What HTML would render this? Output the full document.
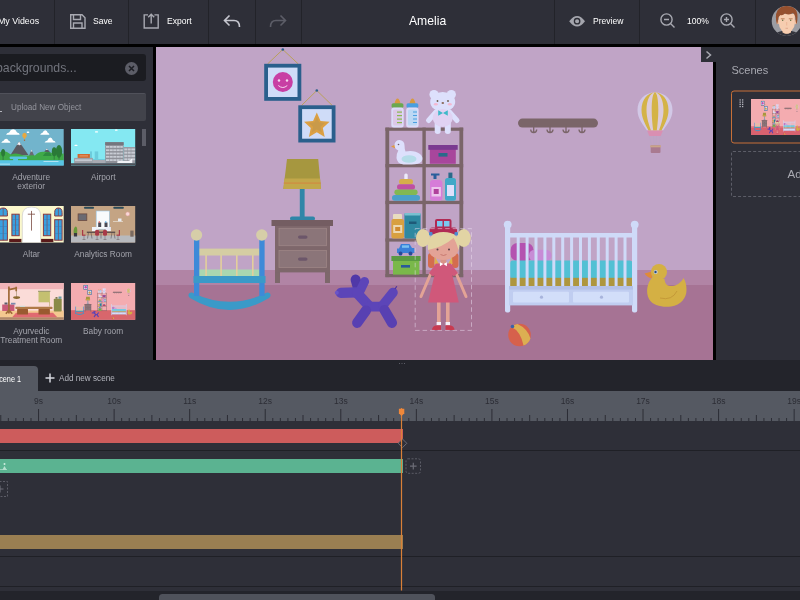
<!DOCTYPE html>
<html><head><meta charset="utf-8"><title>Amelia</title>
<style>
*{box-sizing:border-box;margin:0;padding:0}
html,body{width:800px;height:600px;overflow:hidden;background:#000;font-family:"Liberation Sans",sans-serif;color:#fff}
.abs{position:absolute}
#top{position:absolute;left:0;top:0;width:800px;height:44px;background:#2e2f38}
.sep{position:absolute;top:0;width:1px;height:44px;background:#222329}
.tl{position:absolute;top:0;height:43px;line-height:42px;font-size:9.5px;color:#fff;white-space:nowrap;transform-origin:0 50%;transform:scaleX(.9)}
#left{position:absolute;left:0;top:47px;width:153px;height:313px;background:#2e2f38}
#search{position:absolute;left:-10px;top:7px;width:156px;height:27px;background:#1b1c21;border-radius:3px}
#search span{position:absolute;left:6.3px;transform-origin:0 50%;transform:scaleX(.945);top:0;line-height:27px;font-size:13px;color:#72747d;white-space:nowrap}
#upload{position:absolute;left:-10px;top:46px;width:156px;height:28px;background:#42434b;border-radius:2px;border-top:1px solid #50515a}
#upload span{position:absolute;left:20.5px;transform-origin:0 50%;transform:scaleX(.96);top:0;line-height:27px;font-size:8.5px;color:#94959d;white-space:nowrap}
.th{position:absolute;width:65px;height:37px;overflow:hidden}
.lb{position:absolute;width:78px;text-align:center;font-size:9px;line-height:9.5px;color:#b9bac2}
#right{position:absolute;left:716px;top:47px;width:84px;height:313px;background:#2e2f38}
#mid{position:absolute;left:0;top:360px;width:800px;height:31px;background:#23242b}
#tab{position:absolute;left:-10px;top:6px;width:47.5px;height:25px;background:#555962;border-radius:0 4px 0 0;font-size:9.5px;line-height:25px;color:#fff}
#ruler{position:absolute;left:0;top:391px;width:800px;height:30px;background:#555962}
#tracks{position:absolute;left:0;top:421px;width:800px;height:179px;background:#2e2f38}
.bar{position:absolute;left:0;width:403px;height:14px}
.hl{position:absolute;left:0;width:800px;height:1px;background:#1f2026}
</style></head><body>
<div id="app" style="position:absolute;left:0;top:0;width:800px;height:600px;overflow:hidden;will-change:transform;transform:translateZ(0)">
<div id="top">
 <div class="tl" style="left:-2px;transform:scaleX(.93)">My Videos</div>
 <div class="sep" style="left:54px"></div>
 <div class="tl" style="left:93px">Save</div>
 <div class="sep" style="left:128px"></div>
 <div class="tl" style="left:167px">Export</div>
 <div class="sep" style="left:208px"></div>
 <div class="sep" style="left:255px"></div>
 <div class="sep" style="left:301px"></div>
 <div class="tl" style="left:409px;font-size:13px;transform:scaleX(.935)">Amelia</div>
 <div class="sep" style="left:554px"></div>
 <div class="tl" style="left:593px">Preview</div>
 <div class="sep" style="left:639px"></div>
 <div class="tl" style="left:687px">100%</div>
 <div class="sep" style="left:755px"></div>
 <svg class="abs" style="left:0;top:0" width="800" height="43" viewBox="0 0 800 43" fill="none" stroke="#a8a9b1" stroke-width="1.4">
  <!-- save -->
  <path d="M70.7 14.7h11.3l3 3v10.6h-14.3z"/><path d="M73.5 14.7v4.8h7v-4.8M73.5 28.3v-5.3h8.5v5.3"/>
  <!-- export -->
  <path d="M148 14.9h-3.8v13.1h14v-13.1h-3.8"/><path d="M151.2 23.6v-9.5M148.2 17.2l3-3 3 3"/>
  <!-- undo -->
  <path d="M229.5 15.5l-5 5 5 5M224.5 20.5h9.5q5.5 0 5.5 6.5" stroke="#c6c7cf" stroke-width="1.6"/>
  <!-- redo -->
  <path d="M280.5 15.5l5 5-5 5M285.5 20.5h-9.5q-5.5 0-5.5 6.5" stroke="#5c5d67" stroke-width="1.6"/>
  <!-- eye -->
  <path d="M569.2 21.2q7.9-10.6 15.8 0q-7.9 10.6-15.8 0z" fill="#a4a5ad" stroke="none"/><circle cx="577.1" cy="21.2" r="2.7" fill="#a4a5ad" stroke="#2c2d35" stroke-width="1.3"/>
  <!-- zoom out -->
  <circle cx="666.5" cy="19.5" r="5.6"/><path d="M670.5 23.5l4 4M664 19.5h5"/>
  <!-- zoom in -->
  <circle cx="726.5" cy="19.5" r="5.6"/><path d="M730.5 23.5l4 4M724 19.5h5M726.5 17v5"/>
 </svg>
 <!-- avatar -->
 <svg class="abs" style="left:770px;top:4px" width="30" height="34" viewBox="770 4 30 34">
  <defs><clipPath id="av"><circle cx="786.7" cy="21" r="15"/></clipPath></defs>
  <circle cx="786.7" cy="21" r="15" fill="#9c9da3"/>
  <g clip-path="url(#av)">
   <path d="M773 38q1-5.5 9-7h9.5q8 1.5 9 7z" fill="#33343c"/>
   <path d="M782.5 28h8.5v4.5q-4.2 2.5-8.5 0z" fill="#f0c0a0"/>
   <ellipse cx="778" cy="22" rx="1.5" ry="2.3" fill="#eebb9c"/><ellipse cx="795.7" cy="22" rx="1.5" ry="2.3" fill="#eebb9c"/>
   <path d="M778.8 14h16v9.5q0 4-3 7l-2.5 2.5q-2.5 1-5 0l-2.5-2.5q-3-3-3-7z" fill="#f6cdb0"/>
   <path d="M777 24.5q-2.5-9 0.5-14q3.5-5 9.5-4.5q7 0 9.5 5q2 5 0 13.5q-1-3-1.2-7.5q-0.5-2.5-2.3-4q-3.5 2.5-8 0.5q-2.5 2.5-4.5 1.5q-2.5 1.5-2.5 4.5q0 3-1 5z" fill="#96502e"/>
   <path d="M780.8 18.8h3.8M788.8 18.8h3.8" stroke="#b8764e" stroke-width="0.9"/><circle cx="782.7" cy="20.3" r="0.7" fill="#5a6a3a"/><circle cx="790.7" cy="20.3" r="0.7" fill="#5a6a3a"/>
   <path d="M785.5 28.3h2.5" stroke="#d89a80" stroke-width="0.7"/><path d="M786.7 22v3.5" stroke="#e8b090" stroke-width="0.8"/>
  </g>
 </svg>
</div>

<div id="left">
 <div id="search"><span>backgrounds...</span>
  <svg class="abs" style="left:135px;top:8px" width="13" height="13" viewBox="0 0 13 13"><circle cx="6.5" cy="6.5" r="6.5" fill="#5c5d67"/><path d="M4 4l5 5M9 4l-5 5" stroke="#1d1e24" stroke-width="1.5"/></svg>
 </div>
 <div id="upload"><span>Upload New Object</span><div class="abs" style="left:0;top:17px;width:12px;height:1px;background:#b4b5bd"></div></div>
 <div class="abs" style="left:142px;top:82px;width:4px;height:17px;background:#5c5d67"></div>
<svg class="abs" style="left:0;top:0" width="153" height="313" viewBox="0 47 153 313">
 <defs>
  <clipPath id="c1"><rect x="-1" y="129" width="64.7" height="36.5"/></clipPath>
  <clipPath id="c2"><rect x="71" y="129" width="64.2" height="36.6"/></clipPath>
  <clipPath id="c3"><rect x="-1" y="206" width="64.7" height="36.5"/></clipPath>
  <clipPath id="c4"><rect x="71" y="206" width="64.2" height="36.5"/></clipPath>
  <clipPath id="c5"><rect x="-1" y="283" width="64.7" height="36.7"/></clipPath>
  <clipPath id="c6"><rect x="71" y="283" width="64.2" height="36.7"/></clipPath>
 </defs>
 <!-- Adventure exterior -->
 <g clip-path="url(#c1)">
  <rect x="-1" y="129" width="65" height="37" fill="#72b4cc"/>
  <g fill="#fff"><path d="M6.1 134.7q0.5-2 3-2.2q1.5-3.2 4-3.2q2.5 0 4 3.2q2.5 0.2 2.6 2.2z"/><path d="M40.2 134.7q0.5-1.7 2.3-2q1-2.5 2.8-2.5t2.4 2.5q1.6 0.3 1.7 2z"/><path d="M1.3 142.8q0.5-1.7 2.3-2q1-2.1 2.6-2.1t2.4 2.1q1.8 0.3 1.9 2z"/><path d="M44.6 142.6q0.6-2 2.8-2.2q1.2-3 2.9-3t2.7 3q2.4 0.2 2.6 2.2z"/><rect x="26.7" y="131.5" width="2.6" height="1.4" rx="0.7"/></g>
  <ellipse cx="24.5" cy="135.4" rx="2.2" ry="2.6" fill="#e8a840"/><path d="M23.3 137.5l1.2 2l1.2-2z" fill="#e8a840"/><rect x="23.9" y="139.6" width="1.2" height="1.3" fill="#a86a38"/>
  <path d="M10.5 155l8.6-13.4 9.3 13.4z" fill="#5a5a62"/><path d="M19.1 141.6l-2.2 3.5 1.4-0.5 0.9 1 1-1 1.3 0.6z" fill="#f4f4f8"/>
  <path d="M29 156l2.5-6.4 2.8 6.4z" fill="#6a6a72"/><path d="M31.5 149.6l-0.7 1.8h1.5z" fill="#f4f4f8"/><path d="M43.5 153l3.3-4.4 4 4.4z" fill="#5a5a62"/><path d="M46.8 148.6l-0.9 1.3h2z" fill="#f4f4f8"/>
  <path d="M-1 161v-8.5q4-2 8-0.5q2.5 1.5 4 2.5q4-1.5 8-0.5q5 2 10 1.5q4-0.5 6 0q3-3.5 8-3.7q5-0.2 9 1.2q5 1 12 0.5v7.5z" fill="#3faa48"/>
  <path d="M42.9 156q2-4 5-3.8q3 0.2 3.7 3.8z" fill="#2e8a40"/>
  <g fill="#2a7a38"><ellipse cx="3.1" cy="152.7" rx="2" ry="3.7"/><ellipse cx="54.2" cy="151.8" rx="2.4" ry="4.5"/><ellipse cx="59" cy="151.4" rx="3.2" ry="6.3"/></g>
  <path d="M3.1 156v4M54.2 156v3.7M59 157v2.7" stroke="#2a6a38" stroke-width="0.7"/>
  <rect x="9.6" y="156.6" width="17.5" height="2.3" rx="1" fill="#58c4e4"/><rect x="13.1" y="158" width="4.9" height="3" fill="#58c4e4"/>
  <rect x="-1" y="160.2" width="65" height="6" fill="#58c4e4"/><rect x="43.5" y="161.2" width="15" height="0.8" fill="#c8ecf8"/><rect x="0" y="163.7" width="10" height="0.8" fill="#c8ecf8"/>
 </g>
 <!-- Airport -->
 <g clip-path="url(#c2)">
  <rect x="71" y="129" width="65" height="37" fill="#84e8f2"/>
  <rect x="95" y="131.2" width="3" height="1.3" rx="0.6" fill="#fff"/><rect x="115" y="129.6" width="2.6" height="1.2" rx="0.6" fill="#fff"/><rect x="74.5" y="144.8" width="3" height="1.3" rx="0.6" fill="#fff"/>
  <rect x="90" y="151.4" width="2" height="9" fill="#6cccdc"/><rect x="94.7" y="151.4" width="3.5" height="9" fill="#6cccdc"/><rect x="92" y="159" width="14" height="1.5" fill="#6cccdc"/>
  <rect x="105.2" y="142.2" width="18.4" height="21.2" fill="#8e9098"/><rect x="105.2" y="142.2" width="18.4" height="2.8" fill="#74767e"/><rect x="123.6" y="147" width="11.7" height="16.4" fill="#9a9ca4"/>
  <g fill="#c8ccd4"><rect x="106" y="146" width="16.8" height="1.8"/><rect x="106" y="149.3" width="16.8" height="1.8"/><rect x="106" y="152.6" width="16.8" height="1.8"/><rect x="106" y="155.9" width="16.8" height="1.8"/><rect x="106" y="159.2" width="16.8" height="1.8"/><rect x="124.3" y="148.5" width="11" height="1.8"/><rect x="124.3" y="151.8" width="11" height="1.8"/><rect x="124.3" y="155.1" width="11" height="1.8"/><rect x="124.3" y="158.4" width="11" height="1.8"/></g>
  <g stroke="#8e9098" stroke-width="0.5"><path d="M109.5 145v18M113 145v18M116.5 145v18M120 145v18M127.5 148v15M131 148v15"/></g>
  <rect x="74.1" y="157.9" width="18.8" height="5.5" fill="#9ea0a8"/><rect x="75" y="159.3" width="17" height="1.8" fill="#c4c8d0"/><rect x="92.9" y="160" width="12.3" height="3.4" fill="#a8aab2"/>
  <rect x="77.6" y="154" width="12.3" height="3.9" fill="#d06830"/><rect x="79.5" y="155.4" width="8.5" height="1" fill="#e8a070"/>
  <rect x="71" y="163.2" width="65" height="2.6" fill="#50525a"/>
  <path d="M117 162.3q0-1.2 2-1.3h10l2.5-2.2h0.8v4.2h-14q-1.3 0-1.3-0.7z" fill="#f0f2f6"/>
 </g>
 <!-- Altar -->
 <g clip-path="url(#c3)">
  <rect x="-1" y="206" width="65" height="37" fill="#fbf8cc"/>
  <path d="M22.3 243v-27q0-9 9.2-9t9.2 9v27z" fill="#fff" stroke="#d8d6d0" stroke-width="0.9"/>
  <path d="M31.5 210.9v19.7M27.8 214.2h7.2" stroke="#7a4a40" stroke-width="0.8"/>
  <g fill="#3aa0e0" stroke="#8a3a40" stroke-width="1"><rect x="11.9" y="214.2" width="7.3" height="21.5"/><rect x="43.4" y="214.2" width="7.3" height="21.5"/><rect x="-1" y="219.7" width="8.4" height="20.5"/><rect x="54.7" y="219.7" width="7.4" height="20.5"/>
  <path d="M-1 216v-3.5q0-4.5 4.2-4.5t4.2 4.5v3.5z"/><path d="M54.7 216v-3.5q0-4.5 3.7-4.5t3.7 4.5v3.5z"/></g>
  <g stroke="#8a3a40" stroke-width="0.6"><path d="M15.55 214v22M47.05 214v22M3.2 219.5v21M58.4 219.5v21M3.2 208v8M58.4 208v8"/></g>
  <g stroke="#2a78b8" stroke-width="0.4"><path d="M11.9 219.5h7.3M11.9 225h7.3M11.9 230.5h7.3M43.4 219.5h7.3M43.4 225h7.3M43.4 230.5h7.3M-1 226.5h8.4M-1 233.5h8.4M54.7 226.5h7.4M54.7 233.5h7.4"/></g>
  <rect x="9.2" y="238.9" width="12.2" height="3.3" fill="#5a1a1a"/><rect x="41.1" y="238.9" width="12.3" height="3.3" fill="#5a1a1a"/>
 </g>
 <!-- Analytics Room -->
 <g clip-path="url(#c4)">
  <rect x="71" y="206" width="65" height="37" fill="#c4a484"/><rect x="71" y="235.5" width="65" height="8" fill="#b8babe"/>
  <rect x="84.2" y="206.7" width="9.6" height="2" rx="0.5" fill="#2a4a58"/><rect x="113.5" y="206.7" width="10.1" height="2" rx="0.5" fill="#2a4a58"/>
  <rect x="96.2" y="211" width="13.1" height="18.2" fill="#f8fafc" stroke="#9ac8e8" stroke-width="0.6"/>
  <rect x="78.1" y="213.9" width="8.7" height="6.6" fill="#6a6a72" stroke="#6a4a40" stroke-width="0.8"/><circle cx="127.7" cy="213.9" r="2" fill="#f8d8d8" stroke="#e8a0a0" stroke-width="0.5"/>
  <rect x="113" y="221.3" width="10" height="0.6" fill="#f0ece4"/><rect x="118" y="218.5" width="3.5" height="2.8" fill="#e8ecf4"/>
  <path d="M73.7 233.2q-0.5-5 1.5-6.5q2.5-1.2 2 6.5z" fill="#6a9a38"/><rect x="73.9" y="233" width="3.2" height="3.5" fill="#3a3a40"/>
  <rect x="98.2" y="222.5" width="3" height="4.5" fill="#4a4a55"/><rect x="104.5" y="222.5" width="3" height="4.5" fill="#4a4a55"/><circle cx="99.3" cy="222" r="0.8" fill="#e05050"/><circle cx="105.8" cy="222" r="0.8" fill="#40a0e0"/>
  <rect x="92" y="227" width="6.2" height="4.2" fill="#f0f4fa"/><rect x="105.6" y="227" width="5.3" height="4.2" fill="#e8ecf8"/>
  <rect x="86.8" y="231.7" width="28.4" height="1" fill="#3a3038"/><path d="M88.5 232.5l-1 6M91 232.5l1 6M112 232.5l-1 6M114 232.5l1 6M101 232.5v6" stroke="#4a4048" stroke-width="0.5"/>
  <g fill="#a83a48"><rect x="82" y="230" width="1.2" height="5"/><rect x="82" y="234.6" width="3.5" height="1.2"/><rect x="95.1" y="229.7" width="4" height="6.1" rx="1.5"/><rect x="103" y="229.7" width="4" height="6.1" rx="1.5"/><rect x="118.8" y="230" width="1.2" height="5"/><rect x="116.5" y="234.6" width="3.5" height="1.2"/></g>
  <path d="M84 236v3.5M97.1 236v3.5M105 236v3.5M118 236v3.5M82.5 239.5h3M95.6 239.5h3M103.5 239.5h3M116.5 239.5h3" stroke="#6a5a60" stroke-width="0.5"/>
  <rect x="130.3" y="230.6" width="3.3" height="6.1" fill="#7a6a60"/>
 </g>
 <!-- Ayurvedic -->
 <g clip-path="url(#c5)">
  <rect x="-1" y="283" width="65" height="37" fill="#fbdcd8"/><rect x="-1" y="283" width="65" height="6.2" fill="#f0b4b8"/>
  <rect x="-1" y="310.6" width="65" height="7" fill="#f4c890"/><rect x="-1" y="317.2" width="65" height="3" fill="#b08868"/>
  <path d="M16 312.8h37l4.3 4.4h-45.1z" fill="#e06a70"/>
  <rect x="38.5" y="291.4" width="11.4" height="10.9" fill="#c4c070"/><rect x="38" y="290.8" width="12.4" height="0.9" fill="#8a8a60"/><path d="M49.5 302v4.5" stroke="#a89a50" stroke-width="0.5"/>
  <rect x="53.8" y="298.8" width="7.9" height="12.7" rx="0.8" fill="#8a8a48"/><rect x="55.5" y="297" width="2" height="1.8" fill="#7a7a50"/><rect x="58.5" y="296.5" width="3" height="2.3" fill="#6a9aa0"/>
  <rect x="2.2" y="304.5" width="12.2" height="6.5" fill="#c85a78"/><rect x="4.5" y="302.5" width="3" height="2" fill="#5a5a6a"/><rect x="11" y="302.8" width="4.5" height="1.7" fill="#7a8ab0"/>
  <path d="M8.9 286.6v27M9 289.7l7.2-1.5M16.2 286.8v4.5M8.9 310l-3 3.7M8.9 310l3.3 3.7" stroke="#a06a38" stroke-width="1.7" fill="none"/>
  <path d="M16.5 291v6" stroke="#8a7a50" stroke-width="0.5"/><ellipse cx="16.6" cy="297.6" rx="3.5" ry="1.3" fill="#8a6a30"/>
  <rect x="15.3" y="306.7" width="37.2" height="2.3" rx="0.8" fill="#b07a48"/><rect x="20" y="305.8" width="5" height="1" fill="#c8e0e0"/>
  <rect x="17.1" y="308.9" width="10.9" height="5.7" rx="0.5" fill="#9a5a30"/><rect x="38.5" y="308.9" width="11.4" height="5.7" rx="0.5" fill="#9a5a30"/>
 </g>
 <!-- Baby room -->
 <g clip-path="url(#c6)">
  <rect x="71" y="283" width="65" height="37" fill="#f4acb0"/><rect x="71" y="310.2" width="65" height="10" fill="#d8666c"/>
  <use href="#objs" transform="translate(53.073 277.35) scale(0.1153 0.1215)"/>
 </g>
 <g font-size="8.3" fill="#a3a4ac" text-anchor="middle" font-family="Liberation Sans, sans-serif">
  <text x="31.2" y="179.6">Adventure</text><text x="31.2" y="188.6">exterior</text><text x="103.3" y="179.6">Airport</text>
  <text x="31.3" y="256.6">Altar</text><text x="103.1" y="256.6">Analytics Room</text>
  <text x="31.3" y="333.6">Ayurvedic</text><text x="31.3" y="342.6">Treatment Room</text><text x="103.1" y="333.6">Baby room</text>
 </g>
</svg>

</div>

<svg class="abs" style="left:156px;top:47px" width="557" height="313" viewBox="156 47 557 313">
 <rect x="156" y="47" width="557" height="313" fill="#c0a4c6"/>
 <rect x="156" y="270" width="557" height="90" fill="#b184a5"/>
 <rect x="156" y="285" width="557" height="75" fill="#a67394"/>
<g id="objs">
 <!-- picture frames -->
 <g stroke="#b8a040" stroke-width="0.8" fill="none"><path d="M267.5 64L282.8 49.5L298.3 64"/><path d="M301.5 105.5L316.8 90.5L332.3 105.5"/></g>
 <circle cx="282.8" cy="49.5" r="1.3" fill="#2a5f8c"/><circle cx="316.8" cy="90.5" r="1.3" fill="#2a5f8c"/>
 <rect x="264.2" y="63.8" width="37.1" height="37" fill="#2a5f8c"/><rect x="268" y="67.6" width="29.5" height="29.4" fill="#cfdcf8"/>
 <circle cx="282.8" cy="82" r="10" fill="#c83fa4"/><circle cx="279" cy="80.5" r="1.2" fill="#f6d8f0"/><circle cx="287" cy="80.5" r="1.2" fill="#f6d8f0"/><path d="M278.3 85.5q4.5 4 9 0" stroke="#f6d8f0" stroke-width="1" fill="none"/>
 <rect x="298.3" y="105.3" width="37.2" height="37.2" fill="#2a5f8c"/><rect x="302.1" y="109.1" width="29.6" height="29.6" fill="#cfdcf8"/>
 <path d="M316.8 112.5l3.7 8.4 9.1 0.9-6.8 6.1 1.9 9-7.9-4.6-7.9 4.6 1.9-9-6.8-6.1 9.1-0.9z" fill="#dba043"/>
 <path d="M316.8 117l2.3 5.3 5.7 0.6-4.3 3.8 1.2 5.6-4.9-2.9-4.9 2.9 1.2-5.6-4.3-3.8 5.7-0.6z" fill="#c99a4a"/>

 <!-- lamp -->
 <path d="M287 159h31.2l2.8 30h-37.6z" fill="#a6973f"/><path d="M284.4 178.5h35.6l1 10.5h-37.6z" fill="#c2a74a"/><rect x="283.7" y="182.5" width="37" height="1.2" fill="#d08a40"/>
 <rect x="299.8" y="189" width="4.8" height="28" fill="#2f86a8"/><rect x="290" y="216.6" width="25" height="4.2" rx="2" fill="#2f86a8"/>
 <!-- nightstand -->
 <rect x="275" y="225" width="5" height="58" fill="#7e676b"/><rect x="325" y="225" width="5" height="58" fill="#7e676b"/>
 <rect x="275" y="225" width="55" height="47.4" fill="#7e676b"/><rect x="271.5" y="220" width="61.5" height="6" fill="#745d62"/>
 <rect x="279" y="228.3" width="47.5" height="17.4" fill="#8b7579" stroke="#9d8686" stroke-width="0.8"/><rect x="279" y="250.5" width="47.5" height="17" fill="#8b7579" stroke="#9d8686" stroke-width="0.8"/>
 <rect x="298" y="235.5" width="9.5" height="3.2" rx="1.6" fill="#6c566a"/><rect x="298" y="257.5" width="9.5" height="3.2" rx="1.6" fill="#6c566a"/>

 <!-- cradle -->
 <path d="M189 293.5q2.5-2 5 0q35.5 16.5 71 0q2.5-2 5 0q1.5 2.5-1 4.5q-39.5 24-79 0q-2.5-2-1-4.5z" fill="#3a9ac8"/>
 <rect x="199" y="269.5" width="60.5" height="7" fill="#a9d7b0"/>
 <g fill="#e3cf9c"><rect x="205.3" y="255" width="1.6" height="21"/><rect x="220.3" y="255" width="1.6" height="21"/><rect x="236" y="255" width="1.6" height="21"/><rect x="252" y="255" width="1.6" height="21"/></g>
 <rect x="199" y="248.6" width="60.5" height="6.9" fill="#d5cda3"/>
 <rect x="194" y="238" width="5.3" height="58" fill="#3d8ad8"/><rect x="259.3" y="238" width="5.3" height="58" fill="#3d8ad8"/>
 <rect x="193.5" y="276" width="72" height="7" fill="#3a9ac8"/>
 <circle cx="196.5" cy="235" r="5.7" fill="#d6cea8"/><circle cx="261.8" cy="235" r="5.7" fill="#d6cea8"/>

 <!-- shelf -->
 <g fill="#7a6569"><rect x="385.4" y="127.6" width="3.8" height="149.5"/><rect x="422.4" y="127.6" width="3.4" height="149.5"/><rect x="459.4" y="127.6" width="3.8" height="149.5"/>
 <rect x="385.4" y="127.6" width="77.8" height="3.2"/><rect x="385.4" y="164" width="77.8" height="3.3"/><rect x="385.4" y="200.8" width="77.8" height="3.3"/><rect x="385.4" y="238.4" width="77.8" height="3.2"/><rect x="385.4" y="274" width="77.8" height="3.2"/></g>
 <!-- baby bottles -->
 <path d="M395.5 103.5q2-8 4-0z" fill="#d89a40" stroke="#d89a40" stroke-width="2" stroke-linejoin="round"/><rect x="391.6" y="103.3" width="11.8" height="4.5" rx="1.5" fill="#6aa850"/><rect x="391.3" y="107.5" width="12.4" height="20" rx="2.5" fill="#dcdcf8"/><rect x="393" y="109.5" width="9" height="16" rx="1.5" fill="#dcc8e8"/>
 <g fill="#8ab850"><rect x="397" y="111.5" width="5" height="1.2"/><rect x="397" y="115" width="5" height="1.2"/><rect x="397" y="118.5" width="5" height="1.2"/><rect x="397" y="122" width="5" height="1.2"/></g>
 <path d="M410.5 103.5q2-8 4-0z" fill="#d89a40" stroke="#d89a40" stroke-width="2" stroke-linejoin="round"/><rect x="406.5" y="103.3" width="11.8" height="4.5" rx="1.5" fill="#4a9fe0"/><rect x="406.2" y="107.5" width="12.4" height="20" rx="2.5" fill="#dcdcf8"/><rect x="408" y="109.5" width="9" height="16" rx="1.5" fill="#bcd8f4"/>
 <g fill="#4a9fe0"><rect x="413" y="111.5" width="4" height="1"/><rect x="413" y="115" width="4" height="1"/><rect x="413" y="118.5" width="4" height="1"/><rect x="413" y="122" width="4" height="1"/></g>
 <!-- teddy -->
 <g fill="#dde0fc"><circle cx="434" cy="94.5" r="4.6"/><circle cx="451.3" cy="94.5" r="4.6"/><ellipse cx="442.7" cy="101.8" rx="12.5" ry="9.8"/>
 <path d="M436 112l-7.5 8.5" stroke="#dde0fc" stroke-width="5" stroke-linecap="round"/><path d="M449.5 112l7.5 8.5" stroke="#dde0fc" stroke-width="5" stroke-linecap="round"/>
 <rect x="434.7" y="119" width="6" height="15" rx="3"/><rect x="444.8" y="119" width="6" height="15" rx="3"/></g>
 <ellipse cx="442.7" cy="118" rx="10" ry="9" fill="#e0d2f2"/>
 <path d="M443 113l-4.8-2.8v5.6zM443 113l4.8-2.8v5.6z" fill="#3fb9c9"/>
 <circle cx="437.5" cy="101" r="0.9" fill="#6a5a4a"/><circle cx="448" cy="101" r="0.9" fill="#6a5a4a"/><ellipse cx="442.8" cy="103" rx="1.3" ry="1" fill="#8a6a5a"/><ellipse cx="435.8" cy="104.3" rx="2" ry="1.2" fill="#f4b8d0"/><ellipse cx="449.8" cy="104.3" rx="2" ry="1.2" fill="#f4b8d0"/>
 <!-- swan -->
 <path d="M391 146.5l4-1.8v3.5z" fill="#e09a40"/>
 <path d="M399.5 140a5 5 0 0 1 5 5.2q0 3.5 1 6.3q9-1.5 14.5 2.5q4 3.5 1.5 7.5q-2.5 3-10 3h-8q-6.5-1-7-6.5q-0.3-4 1.8-7.5q-3.8-1.5-3.8-5.5a5 5 0 0 1 5-5z" fill="#dde0fc"/>
 <ellipse cx="409" cy="159" rx="7.5" ry="3.8" fill="#b5dce8"/><circle cx="398.5" cy="144.5" r="0.8" fill="#6a5a6a"/>
 <!-- purple box -->
 <rect x="429.8" y="149" width="26" height="14.8" fill="#a8469c"/><rect x="428.3" y="145" width="29.4" height="4.8" fill="#7a3a90"/><rect x="438.5" y="153" width="9" height="3.6" fill="#2a6a8a"/>
 <!-- rings -->
 <rect x="404.3" y="173.5" width="3.4" height="8" rx="1.5" fill="#eceafa"/>
 <rect x="399" y="179" width="14" height="5.6" rx="2.8" fill="#d6ae4a"/><rect x="397" y="184.3" width="18" height="5.4" rx="2.7" fill="#bf4fa2"/><rect x="394.4" y="189.4" width="23.2" height="5.7" rx="2.8" fill="#82b852"/><rect x="392" y="195" width="28" height="5.8" rx="2.8" fill="#4aa0c8"/>
 <!-- pink/teal bottles -->
 <path d="M431 173.5h8.5v2h-3v3.5h-3v-3.5h-2.5z" fill="#2a5f9c"/><rect x="430" y="180" width="12.4" height="20.8" rx="3" fill="#d67cd8"/><rect x="431.5" y="187" width="9.4" height="9.5" fill="#ecc4ec"/><rect x="433.7" y="189" width="5" height="5" fill="#b0409c"/>
 <rect x="448.4" y="172.6" width="4" height="6" fill="#2a6a8a"/><rect x="445" y="178" width="11" height="22.8" rx="2.5" fill="#40a8c8"/><rect x="447" y="185" width="7" height="11" fill="#dde0fc"/>
 <!-- jars -->
 <rect x="393" y="214" width="9" height="5.5" rx="1" fill="#e8dcc0"/><rect x="391.4" y="219" width="12.6" height="19.4" rx="2" fill="#d8a040"/><rect x="393.2" y="225" width="9" height="8" fill="#ecd8b0"/><rect x="395.2" y="227" width="5" height="4" fill="#d08a30"/>
 <rect x="404.4" y="213" width="16.2" height="25.4" rx="1.5" fill="#2e88a0"/><rect x="404.4" y="213" width="16.2" height="2.5" rx="1" fill="#7ac0d0"/><rect x="409" y="221.5" width="7.5" height="2.5" fill="#1e5a78"/>
 <!-- red car -->
 <rect x="435" y="219" width="16.5" height="10" rx="2" fill="#b02a54"/><rect x="429.6" y="227.5" width="27.4" height="7" rx="2.5" fill="#b02a54"/><rect x="437" y="221" width="5.5" height="5.5" fill="#7ac8f0"/><rect x="444" y="221" width="5.5" height="5.5" fill="#7ac8f0"/>
 <!-- blue car -->
 <path d="M401 244h8.5l2.5 4h2.4v5h-17.4v-4.5h2z" fill="#3a80d8"/><circle cx="400.5" cy="253.5" r="2" fill="#2a4a9a"/><circle cx="410.5" cy="253.5" r="2" fill="#2a4a9a"/><rect x="402" y="245.3" width="7" height="2.5" fill="#7ac0f0"/>
 <!-- green box -->
 <rect x="393" y="260" width="26.4" height="14.6" fill="#7ab84a"/><rect x="391.4" y="256" width="29.2" height="5" fill="#5a9a42"/><rect x="401" y="265" width="9" height="2.6" fill="#2a5a9a"/>

 <!-- coat rack -->
 <rect x="518" y="118.6" width="80" height="9" rx="4.5" fill="#7a6569"/>
 <g stroke="#7a6569" stroke-width="1.3" fill="none"><path d="M533.7 124v8M530.7 129.5q0 3 3 3t3-3"/><path d="M550 124v8M547 129.5q0 3 3 3t3-3"/><path d="M566 124v8M563 129.5q0 3 3 3t3-3"/><path d="M582 124v8M579 129.5q0 3 3 3t3-3"/></g>

 <!-- hot air balloon -->
 <g><path d="M655 92.4c-11 0-17.5 8-17.5 17.5c0 9 6 15 9.5 20.7h16c3.5-5.7 9.5-11.7 9.5-20.7c0-9.5-6.5-17.5-17.5-17.5z" fill="#d2c8e6"/>
 <path d="M655 92.4c-7 0-13.5 7-13.5 17.5c0 8 4 14.5 7 20.7h13c3-6.2 7-12.7 7-20.7c0-10.5-6.5-17.5-13.5-17.5z" fill="#d4b346"/>
 <path d="M655 92.4c-5 0-8.5 8-8.5 17.5c0 8 2.5 14.5 4.5 20.7h8c2-6.2 4.5-12.7 4.5-20.7c0-9.5-3.5-17.5-8.5-17.5z" fill="#dccbd9"/>
 <path d="M655 92.4c-2.2 0-3.3 8-3.3 17.5c0 8 0.8 14.5 1.5 20.7h3.6c0.7-6.2 1.5-12.7 1.5-20.7c0-9.5-1.1-17.5-3.3-17.5z" fill="#d4b346"/>
 <path d="M647 130.4h16l-2.3 5.7h-11.4z" fill="#d98fb2"/>
 <path d="M649.5 136l1.8 9.5M660.5 136l-1.8 9.5M653.5 136l0.5 9.5M656.5 136l-0.5 9.5" stroke="#b9a6c4" stroke-width="0.6"/>
 <rect x="650.7" y="145.3" width="9.8" height="7.8" rx="1" fill="#a97a90"/><rect x="650.2" y="145.3" width="10.8" height="2" fill="#c9a58a"/></g>

 <!-- crib -->
 <rect x="510.5" y="243" width="23" height="18" rx="7" fill="#b452b0"/><rect x="529" y="249.7" width="22.5" height="11.5" rx="5.5" fill="#c78cd6"/>
 <rect x="510" y="260.4" width="122.5" height="18" rx="3" fill="#52c0d4"/><rect x="510" y="277.8" width="122.5" height="8.4" fill="#ae963e"/>
 <g fill="#cfdaf8"><rect x="505" y="224" width="5.2" height="88.5" rx="2"/><rect x="632" y="224" width="5.2" height="88.5" rx="2"/><circle cx="507.7" cy="224.6" r="3.9"/><circle cx="634.7" cy="224.6" r="3.9"/>
 <rect x="507" y="233" width="128" height="4.5"/><rect x="516.7" y="236" width="3" height="50"/><rect x="525.6" y="236" width="3" height="50"/><rect x="534.5" y="236" width="3" height="50"/><rect x="543.4" y="236" width="3" height="50"/><rect x="552.3" y="236" width="3" height="50"/><rect x="561.2" y="236" width="3" height="50"/><rect x="570.1" y="236" width="3" height="50"/><rect x="579" y="236" width="3" height="50"/><rect x="587.9" y="236" width="3" height="50"/><rect x="596.8" y="236" width="3" height="50"/><rect x="605.7" y="236" width="3" height="50"/><rect x="614.6" y="236" width="3" height="50"/><rect x="623.5" y="236" width="3" height="50"/></g>
 <rect x="509" y="286" width="124" height="4" fill="#b4c1e8"/><rect x="509" y="289.6" width="124" height="15.8" fill="#c0cdf0"/>
 <rect x="513" y="291.8" width="56" height="10.6" rx="1" fill="#d2def9"/><rect x="573" y="291.8" width="56" height="10.6" rx="1" fill="#d2def9"/><circle cx="541.5" cy="297.2" r="1.6" fill="#a8b4dc"/><circle cx="601.5" cy="297.2" r="1.6" fill="#a8b4dc"/>

 <!-- ball -->
 <circle cx="519.5" cy="335" r="11.3" fill="#d6614c"/><path d="M511.5 327q9 4 12 18.5a11.3 11.3 0 0 0 7-7q-3-10-13-14.5a11.3 11.3 0 0 0-6 3z" fill="#dcae52"/><circle cx="512.5" cy="326.5" r="1.8" fill="#3a62a8"/>

 <!-- duck -->
 <path d="M644.5 273.5l7.5-2v7q-4-0.5-7.5-5z" fill="#e08a38"/>
 <circle cx="659" cy="272" r="8" fill="#d4b044"/>
 <path d="M652.5 277C647 283 645.5 292 649 299C653 306 663 307.5 671 306.5C681 305 686.5 298 686.5 290C686.5 285 685.5 281 683.5 278C681 283 676 286.5 670 286C667 285.7 665 284 664.5 279Z" fill="#d4b044"/>
 <path d="M660 298q12 3 17-7" stroke="#c49a38" stroke-width="1" fill="none"/><circle cx="655.7" cy="272" r="2" fill="#c8d4e8"/><circle cx="655.5" cy="272" r="1.2" fill="#2a4a7a"/>

 <!-- balloon dog -->
 <g stroke="#5c45b8" stroke-width="10.2" stroke-linecap="round" fill="none">
  <path d="M358.5 290L355.6 279.6" stroke="#5038a8" stroke-width="10"/><path d="M360.5 290L364.6 281.6" stroke-width="9"/>
  <path d="M340.8 292.9L356 292.4"/><path d="M357 293L369 306"/><path d="M369 306.6L382 306.6" stroke-width="9.6"/><path d="M383 305L393 292.5" stroke-width="9.6"/>
  <path d="M366 310.5L357.2 322.8" stroke="#5840b2"/><path d="M384.5 310L392 322.8" stroke="#5840b2"/>
 </g>
 <circle cx="336.8" cy="292.8" r="2" fill="#6a55c8"/><path d="M395 289l1.8-2.8" stroke="#4a32a0" stroke-width="1.2"/>
</g>
<g id="girl">
 <!-- girl -->
 <g>
  <rect x="428" y="253" width="6.5" height="15" rx="3" fill="#d46c4e"/><rect x="452" y="253" width="6.5" height="15" rx="3" fill="#d46c4e"/>
  <ellipse cx="423" cy="238" rx="7" ry="9" fill="#e2d4a4"/><ellipse cx="463.8" cy="238" rx="7" ry="9" fill="#e2d4a4"/>
  <rect x="440.4" y="255" width="6" height="11" fill="#d99488"/><ellipse cx="443.4" cy="247.5" rx="15.5" ry="12.5" fill="#e3a396"/>
  <path d="M428 250q-2-18 15.4-18q16.5 0 16 14q-0.5 3-1 4q-2-8-5-12q-10 9-25.4 12z" fill="#e2d4a4"/>
  <rect x="429" y="232" width="3.5" height="3.5" rx="1" fill="#4a8ad0"/><rect x="454.5" y="232" width="3.5" height="3.5" rx="1" fill="#4a8ad0"/>
  <path d="M435 257l4 7h-4.5zM452 257l-4 7h4.5z" fill="#e0b24a"/>
  <circle cx="437.5" cy="249.5" r="1" fill="#5a4048"/><circle cx="449" cy="249.5" r="1" fill="#5a4048"/><path d="M440.5 254.5q3 2 6 0" stroke="#c07068" stroke-width="0.8" fill="none"/>
  <path d="M431 273L421 296.5M456 273L466 296.5" stroke="#e3a396" stroke-width="3" stroke-linecap="round"/>
  <rect x="437" y="300" width="3.6" height="23" fill="#e3a396"/><rect x="446" y="300" width="3.6" height="23" fill="#e3a396"/>
  <path d="M436 263.5h14.8l7 9.5-4 3.5-1.5-1.5l6.5 27.5h-30.8l6.5-27.5-1.5 1.5-4-3.5z" fill="#d0587a"/>
  <path d="M443.4 264l-3.5 -1.8v4zM443.4 264l3.5-1.8v4z" fill="#fff"/>
  <rect x="436.6" y="322" width="4.4" height="3.5" fill="#f4f0f8"/><rect x="445.6" y="322" width="4.4" height="3.5" fill="#f4f0f8"/>
  <path d="M432 330q0-4 5-4.8h4v4.8zM454.5 330q0-4-5-4.8h-4v4.8z" fill="#c83a50"/>
 </g>
 <rect x="415.2" y="228.6" width="56.3" height="101.8" fill="none" stroke="#eadcf0" stroke-width="0.8" stroke-dasharray="4.5 3" opacity="0.65"/>
</g>

</svg>
<div id="right">
 <div class="abs" style="left:15.5px;top:16px;font-size:11px;line-height:14px;color:#a8a9b1">Scenes</div>
 <svg class="abs" style="left:0;top:0" width="84" height="313" viewBox="716 47 84 313">
  <g fill="#b4b5bd"><rect x="739.5" y="99.3" width="1.3" height="1.3"/><rect x="742" y="99.3" width="1.3" height="1.3"/><rect x="739.5" y="101.5" width="1.3" height="1.3"/><rect x="742" y="101.5" width="1.3" height="1.3"/><rect x="739.5" y="103.7" width="1.3" height="1.3"/><rect x="742" y="103.7" width="1.3" height="1.3"/><rect x="739.5" y="105.9" width="1.3" height="1.3"/><rect x="742" y="105.9" width="1.3" height="1.3"/></g>
  <rect x="731.5" y="91" width="90" height="52" rx="2.5" fill="none" stroke="#c87038" stroke-width="1"/>
  <defs><clipPath id="sc"><rect x="751" y="98.9" width="60" height="36.2"/></clipPath></defs>
  <g clip-path="url(#sc)"><rect x="751" y="98.9" width="60" height="36.2" fill="#f4acb0"/><rect x="751" y="126.2" width="60" height="9" fill="#e07882"/><rect x="751" y="127.8" width="60" height="8" fill="#d9626f"/>
  <use href="#objs" transform="translate(736.648 93.119) scale(0.092 0.123)"/><use href="#girl" transform="translate(736.648 93.119) scale(0.092 0.123)"/></g>
 </svg>
 <div class="abs" style="left:15px;top:104px;width:90px;height:46px;border:1px dashed #5c5d67;border-radius:2px"></div>
 <div class="abs" style="left:71.5px;top:119.5px;font-size:11.5px;line-height:14px;color:#a8a9b1">Add</div>
</div>
<div class="abs" style="left:701px;top:47px;width:15px;height:15px;background:#2e2f38"></div>
<svg class="abs" style="left:701px;top:47px" width="15" height="15" viewBox="701 47 15 15"><path d="M706.5 51.5l4 3.5-4 3.5" fill="none" stroke="#a8a9b1" stroke-width="1.5"/></svg>

<div id="mid">
 <div class="abs" style="left:399px;top:2.5px;width:1px;height:1px;background:#5c5d67;box-shadow:2.5px 0 #5c5d67,5px 0 #5c5d67"></div>
 <div id="tab"><span style="position:absolute;right:16.2px;top:0.5px;font-size:9px;white-space:nowrap;transform-origin:100% 50%;transform:scaleX(.81)">Scene 1</span></div>
 <div class="abs" style="left:59.4px;top:0;line-height:36px;font-size:8.5px;color:#b4b5bd;white-space:nowrap;transform-origin:0 50%;transform:scaleX(.96)">Add new scene</div>
 <svg class="abs" style="left:44px;top:12px" width="12" height="12" viewBox="0 0 12 12"><path d="M6 1.5v9M1.5 6h9" stroke="#d6d7df" stroke-width="1.5"/></svg>
</div>
<div id="ruler"></div>
<svg class="abs" style="left:0;top:391px" width="800" height="30" viewBox="0 391 800 30">
<g stroke="#2c2d35" stroke-width="1">
<path d="M0.77 415V421"/>
<path d="M8.33 418V421"/>
<path d="M15.88 418V421"/>
<path d="M23.44 418V421"/>
<path d="M30.99 418V421"/>
<path d="M38.55 409V421"/>
<path d="M46.11 418V421"/>
<path d="M53.66 418V421"/>
<path d="M61.22 418V421"/>
<path d="M68.77 418V421"/>
<path d="M76.33 415V421"/>
<path d="M83.89 418V421"/>
<path d="M91.44 418V421"/>
<path d="M99 418V421"/>
<path d="M106.55 418V421"/>
<path d="M114.11 409V421"/>
<path d="M121.67 418V421"/>
<path d="M129.22 418V421"/>
<path d="M136.78 418V421"/>
<path d="M144.33 418V421"/>
<path d="M151.89 415V421"/>
<path d="M159.45 418V421"/>
<path d="M167 418V421"/>
<path d="M174.56 418V421"/>
<path d="M182.11 418V421"/>
<path d="M189.67 409V421"/>
<path d="M197.23 418V421"/>
<path d="M204.78 418V421"/>
<path d="M212.34 418V421"/>
<path d="M219.89 418V421"/>
<path d="M227.45 415V421"/>
<path d="M235.01 418V421"/>
<path d="M242.56 418V421"/>
<path d="M250.12 418V421"/>
<path d="M257.67 418V421"/>
<path d="M265.23 409V421"/>
<path d="M272.79 418V421"/>
<path d="M280.34 418V421"/>
<path d="M287.9 418V421"/>
<path d="M295.45 418V421"/>
<path d="M303.01 415V421"/>
<path d="M310.57 418V421"/>
<path d="M318.12 418V421"/>
<path d="M325.68 418V421"/>
<path d="M333.23 418V421"/>
<path d="M340.79 409V421"/>
<path d="M348.35 418V421"/>
<path d="M355.9 418V421"/>
<path d="M363.46 418V421"/>
<path d="M371.01 418V421"/>
<path d="M378.57 415V421"/>
<path d="M386.13 418V421"/>
<path d="M393.68 418V421"/>
<path d="M401.24 418V421"/>
<path d="M408.79 418V421"/>
<path d="M416.35 409V421"/>
<path d="M423.91 418V421"/>
<path d="M431.46 418V421"/>
<path d="M439.02 418V421"/>
<path d="M446.57 418V421"/>
<path d="M454.13 415V421"/>
<path d="M461.69 418V421"/>
<path d="M469.24 418V421"/>
<path d="M476.8 418V421"/>
<path d="M484.35 418V421"/>
<path d="M491.91 409V421"/>
<path d="M499.47 418V421"/>
<path d="M507.02 418V421"/>
<path d="M514.58 418V421"/>
<path d="M522.13 418V421"/>
<path d="M529.69 415V421"/>
<path d="M537.25 418V421"/>
<path d="M544.8 418V421"/>
<path d="M552.36 418V421"/>
<path d="M559.91 418V421"/>
<path d="M567.47 409V421"/>
<path d="M575.03 418V421"/>
<path d="M582.58 418V421"/>
<path d="M590.14 418V421"/>
<path d="M597.69 418V421"/>
<path d="M605.25 415V421"/>
<path d="M612.81 418V421"/>
<path d="M620.36 418V421"/>
<path d="M627.92 418V421"/>
<path d="M635.47 418V421"/>
<path d="M643.03 409V421"/>
<path d="M650.59 418V421"/>
<path d="M658.14 418V421"/>
<path d="M665.7 418V421"/>
<path d="M673.25 418V421"/>
<path d="M680.81 415V421"/>
<path d="M688.37 418V421"/>
<path d="M695.92 418V421"/>
<path d="M703.48 418V421"/>
<path d="M711.03 418V421"/>
<path d="M718.59 409V421"/>
<path d="M726.15 418V421"/>
<path d="M733.7 418V421"/>
<path d="M741.26 418V421"/>
<path d="M748.81 418V421"/>
<path d="M756.37 415V421"/>
<path d="M763.93 418V421"/>
<path d="M771.48 418V421"/>
<path d="M779.04 418V421"/>
<path d="M786.59 418V421"/>
<path d="M794.15 409V421"/>
</g>
<g font-size="8.5" fill="#2c2d35" text-anchor="middle" font-family="Liberation Sans, sans-serif">
<text x="38.5" y="403.6">9s</text>
<text x="114.1" y="403.6">10s</text>
<text x="189.7" y="403.6">11s</text>
<text x="265.2" y="403.6">12s</text>
<text x="340.8" y="403.6">13s</text>
<text x="416.4" y="403.6">14s</text>
<text x="491.9" y="403.6">15s</text>
<text x="567.5" y="403.6">16s</text>
<text x="643" y="403.6">17s</text>
<text x="718.6" y="403.6">18s</text>
<text x="794.1" y="403.6">19s</text>
</g></svg>
<div id="tracks">
 <div class="bar" style="top:8px;background:#cd5c5c"></div>
 <div class="hl" style="top:29px"></div>
 <div class="bar" style="top:38px;background:#5bb391"></div>
 <div class="bar" style="top:114px;background:#9a7f52"></div>
 <div class="hl" style="top:135px"></div>
 <div class="hl" style="top:165px"></div>
 <div class="abs" style="left:0;top:170px;width:800px;height:9px;background:#23242b"></div>
 <div class="abs" style="left:159px;top:173px;width:276px;height:10px;background:#4f525b;border-radius:3.5px"></div>
 <svg class="abs" style="left:0;top:-13px" width="800" height="192" viewBox="0 408 800 192">
  <rect x="406" y="458.8" width="14.5" height="14.5" rx="2" fill="none" stroke="#5c5d67" stroke-width="1" stroke-dasharray="2 1.5"/>
  <path d="M413.3 462.8v6.6M410 466.1h6.6" stroke="#6c6d77" stroke-width="1.2"/>
  <rect x="-7.5" y="481.5" width="15" height="15" fill="none" stroke="#5c5d67" stroke-width="1" stroke-dasharray="2 1.5"/>
  <path d="M0 485.5v7M-3.5 489h7" stroke="#6c6d77" stroke-width="1.2"/>
  <path d="M398.2 443.3l4.3-4.3 4.3 4.3-4.3 4.3z" fill="#2e2f38" stroke="#6c6d77" stroke-width="1"/>
  <g fill="#cfeee0"><circle cx="4.5" cy="464" r="1"/><path d="M2.5 469.5l2-3.5 2 3.5z" opacity="0.8"/><rect x="0" y="469" width="7" height="0.8" opacity="0.7"/></g>
  <rect x="400.9" y="408" width="1.2" height="182.5" fill="#d98038"/>
  <path d="M398.9 408.7h5.4v4.6l-2.7 2.7l-2.7-2.7z" fill="#f0883a"/>
 </svg>

</div>
</div>
</body></html>
